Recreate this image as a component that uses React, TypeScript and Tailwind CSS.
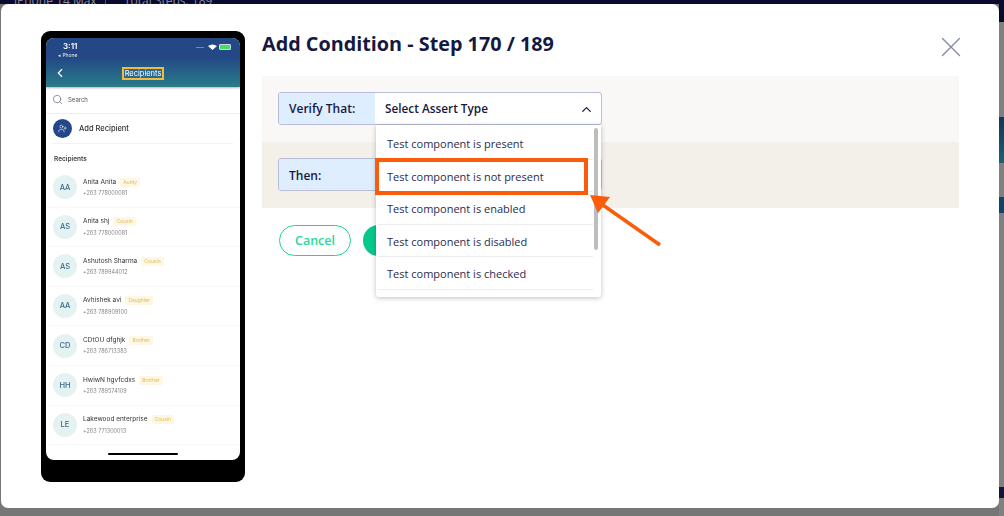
import { FC } from 'react';
import { ChevronLeft, ChevronUp, Search, UserPlus, X } from 'lucide-react';

const recipients = [
  { initials: 'AA', name: 'Anita Anita', tag: 'Aunty', phone: '+263 778000081' },
  { initials: 'AS', name: 'Anita shj', tag: 'Cousin', phone: '+263 778000081' },
  { initials: 'AS', name: 'Ashutosh Sharma', tag: 'Cousin', phone: '+263 789944012' },
  { initials: 'AA', name: 'Avhishek avi', tag: 'Daughter', phone: '+263 788909100' },
  { initials: 'CD', name: 'CDtOU dfghjk', tag: 'Brother', phone: '+263 786713383' },
  { initials: 'HH', name: 'HwiwN hgvfcdxs', tag: 'Brother', phone: '+263 789574109' },
  { initials: 'LE', name: 'Lakewood enterprise', tag: 'Cousin', phone: '+263 771300013' },
];

const assertTypes = [
  'Test component is present',
  'Test component is not present',
  'Test component is enabled',
  'Test component is disabled',
  'Test component is checked',
];

const Phone: FC = () => (
  <div className="h-[451px] w-[204px] shrink-0 rounded-[9px] bg-black px-[5px] pt-[7px] font-['Inter',sans-serif]">
    <div className="flex h-[422px] flex-col overflow-hidden rounded-[8px] bg-white blur-[0.3px]">
      <div className="h-[49px] shrink-0 bg-gradient-to-b from-[#234885] from-40% to-[#2b7c88] px-[12px] pt-[4px] text-white shadow-[0_1px_2px_rgba(0,0,0,0.3)]">
        <div className="flex items-start justify-between">
          <div>
            <div className="pl-[5px] text-[8px] leading-[9px] font-semibold">3:11</div>
            <div className="text-[5px] leading-[8px] text-gray-200">◂ Phone</div>
          </div>
          <div className="mr-[-3px] flex items-center gap-[2px] pt-[2px]">
            <div className="mr-[2px] h-[1px] w-[8px] bg-[#6f8ab0]" />
            <svg width="9" height="6" viewBox="0 0 9 6">
              <path d="M0 2 Q4.5 -1 9 2 L4.5 6 Z" fill="#fff" />
            </svg>
            <div className="h-[6px] w-[12px] rounded-[1px] border border-[#cfd8e6] bg-[#4cd964]" />
          </div>
        </div>
        <div className="relative mt-[7px] flex h-[14px] items-center justify-center">
          <ChevronLeft className="absolute left-[-5px] h-[14px] w-[14px]" strokeWidth={2} />
          <div className="border-2 border-[#f2b93b] bg-[#2a6a92] px-[1px] text-[7.5px] leading-[9px]">Recipients</div>
        </div>
      </div>
      <div className="flex h-[27px] shrink-0 items-center gap-[5px] border-b border-[#eeeeee] pb-[1px] pl-[6px] text-[6px] text-[#555]">
        <Search className="h-[11px] w-[11px] text-[#667]" strokeWidth={1.5} />
        Search
      </div>
      <div className="mx-[7px] flex h-[30px] shrink-0 items-center gap-[7px] border-b border-[#f2f2f2] text-[7.5px] font-medium text-[#333]">
        <div className="flex h-[19px] w-[19px] items-center justify-center rounded-full bg-[#23488a]">
          <UserPlus className="h-[9px] w-[9px] text-white" strokeWidth={1.5} />
        </div>
        Add Recipient
      </div>
      <div className="pt-[10px] pl-[8px] text-[6.5px] leading-[10px] font-semibold text-[#444]">Recipients</div>
      <div className="mt-[4px]">
        {recipients.map((r) => (
          <div key={r.name + r.phone} className="flex h-[39.6px] items-center gap-[6px] border-b border-[#f8f8f8] pl-[7px]">
            <div className="flex h-[24px] w-[24px] shrink-0 items-center justify-center rounded-full bg-[#e4f3f2] text-[7.5px] font-medium text-[#3d6a8a]">
              {r.initials}
            </div>
            <div>
              <div className="flex items-center gap-[4px] text-[6.5px] leading-[9px] text-[#333]">
                {r.name}
                <span className="rounded-[1px] bg-[#fdf7e3] px-[3px] text-[5px] leading-[9px] text-[#e0c05c]">{r.tag}</span>
              </div>
              <div className="mt-[3.5px] text-[5.5px] leading-[7px] text-[#888]">{r.phone}</div>
            </div>
          </div>
        ))}
      </div>
      <div className="mt-auto mb-[5px] h-[2px] w-[70px] self-center rounded-full bg-black" />
    </div>
  </div>
);

const App: FC = () => {
  return (
    <div className="relative h-[516px] w-[1004px] overflow-hidden bg-[#767676] font-['Open_Sans',sans-serif]">
      {/* page behind the dimmed overlay */}
      <div className="flex h-[4px] overflow-hidden bg-[#0a0a2e] pl-[14px] text-[12px] leading-[2px] text-[#8a8a99]">
        <span className="w-[91px]">iPhone 14 Max</span>
        <span className="border-l border-[#555] pl-[18px]">Total Steps: 189</span>
      </div>
      <div className="absolute top-0 right-0 flex h-full w-[5px] flex-col bg-[#808080]">
        <div className="h-[22px] bg-[#0a0a2e]" />
        <div className="mt-[95px] h-[46px] bg-gradient-to-b from-[#123659] to-[#1f6070]" />
        <div className="mt-[34px] h-[16px] bg-[#0f4468]" />
        <div className="mt-[274px] h-[11px] bg-[#14143a]" />
      </div>

      <div className="absolute top-[4px] left-[1px] flex h-[504px] w-[998px] gap-[17px] rounded-[7px] bg-white pt-[27px] pl-[40px]">
        <Phone />
        <div className="relative w-[697px]">
          <h1 className="text-[19.8px] leading-[25px] font-bold text-[#16193f]">Add Condition - Step 170 / 189</h1>
          <X className="absolute top-[-1.5px] right-[-8.5px] h-[34px] w-[34px] text-[#8b8ea8]" strokeWidth={1} />

          <div className="mt-[20px]">
            <div className="h-[66px] bg-[#faf8f6] px-[16px] pt-[16px]">
              <div className="flex h-[33px] w-[324px] overflow-hidden rounded-[3px] border border-[#b9bdd6] bg-white text-[12px] text-[#16193f]">
                <div className="flex w-[96px] items-center bg-[#deeeff] pt-[1px] pl-[10px] font-semibold">Verify That:</div>
                <div className="flex flex-1 items-center justify-between pt-[1px] pr-[7px] pl-[10px] text-[11.8px] font-semibold">
                  Select Assert Type
                  <ChevronUp className="h-[15px] w-[15px]" strokeWidth={2} />
                </div>
              </div>
            </div>
            <div className="h-[66px] bg-[#f3f0ea] px-[16px] pt-[16px]">
              <div className="flex h-[33px] w-[324px] overflow-hidden rounded-[3px] border border-[#b9bdd6] bg-white text-[12px] text-[#16193f]">
                <div className="flex w-[96px] items-center bg-[#deeeff] pt-[2px] pl-[10px] font-semibold">Then:</div>
              </div>
            </div>
          </div>

          <div className="mt-[17px] flex gap-[12px] pl-[17px]">
            <button className="h-[31px] w-[72px] rounded-full border-[1.5px] border-[#1fd592] pt-[1px] text-[12.5px] font-semibold text-[#27d99a]">Cancel</button>
            <button className="h-[31px] w-[72px] rounded-full bg-[#05c98a]" />
          </div>

          {/* assert type dropdown */}
          <div className="absolute top-[94px] left-[114px] h-[172px] w-[225px] overflow-hidden rounded-b-[3px] bg-white shadow-[0_1px_5px_rgba(0,0,0,0.25)]">
            <div className="pt-[2px] pr-[8px] pl-[2px]">
              {assertTypes.map((t) => (
                <div key={t} className="flex h-[32.5px] items-center border-b border-[#ececec] pt-[3px] pl-[9px] text-[11px] text-[#2a2d4c]">
                  {t}
                </div>
              ))}
            </div>
            <div className="absolute top-[3px] right-[3px] h-[122px] w-[4px] rounded-full bg-[#bdbdbd]" />
          </div>

          {/* annotation */}
          <div className="absolute top-[127px] left-[113px] h-[37px] w-[213px] border-4 border-[#fa5c0a]" />
          <svg className="absolute top-[158px] left-[325px]" width="80" height="64" viewBox="0 0 80 64" fill="none">
            <path d="M73 56 L13 14" stroke="#fa5c0a" strokeWidth="3.5" />
            <path d="M3 6 L23 8 L11 24 Z" fill="#fa5c0a" />
          </svg>
        </div>
      </div>
    </div>
  );
};

export default App;
